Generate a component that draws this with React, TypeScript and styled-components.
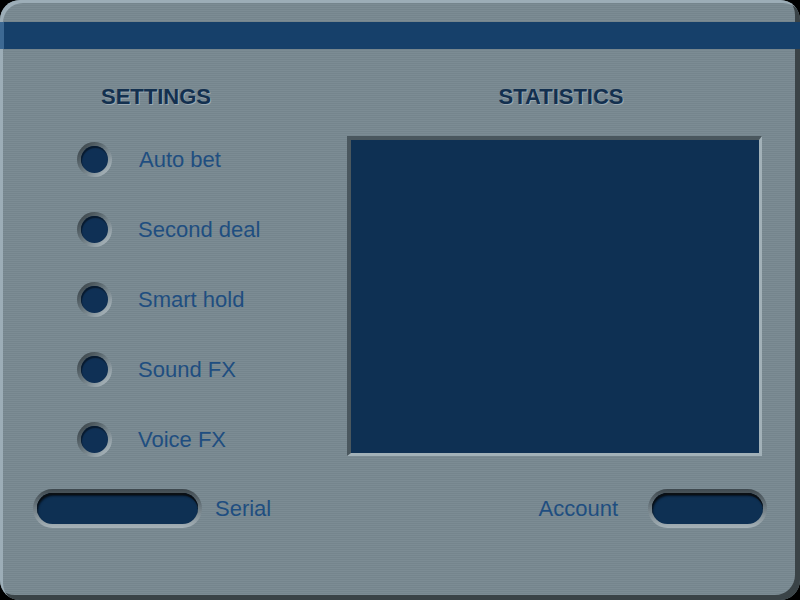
import styled, { createGlobalStyle } from 'styled-components'

const settings = ['Auto bet', 'Second deal', 'Smart hold', 'Sound FX', 'Voice FX']

const App = () => {
	return (
		<>
			<GlobalStyle />
			<Frame>
				<TitleBar />
				<Main>
					<Column>
						<Heading>SETTINGS</Heading>
						<OptionList>
							{settings.map(name => (
								<Option key={name}>
									<Knob>
										<KnobFace />
									</Knob>
									<Label $shift={name === 'Auto bet' ? 1 : 0}>{name}</Label>
								</Option>
							))}
						</OptionList>
					</Column>
					<Column>
						<Heading $offset={13}>STATISTICS</Heading>
						<StatsBox />
					</Column>
				</Main>
				<Footer>
					<FieldGroup $gap={13}>
						<Field $width={169}>
							<FieldFace />
						</Field>
						<Label>Serial</Label>
					</FieldGroup>
					<FieldGroup $gap={30}>
						<Label>Account</Label>
						<Field $width={119}>
							<FieldFace />
						</Field>
					</FieldGroup>
				</Footer>
			</Frame>
		</>
	)
}

export default App

const GlobalStyle = createGlobalStyle`
	html, body {
		margin: 0;
		padding: 0;
		background: #000;
	}
	body {
		width: 800px;
		height: 600px;
		overflow: hidden;
		font-family: 'Liberation Sans', Arial, sans-serif;
	}
`

const Frame = styled.div`
	width: 800px;
	height: 600px;
	box-sizing: border-box;
	border-radius: 20px;
	overflow: hidden;
	display: flex;
	flex-direction: column;
	background: repeating-linear-gradient(
		to bottom,
		#7c8c94 0px,
		#7c8c94 1px,
		#75858d 1px,
		#75858d 2px
	);
	box-shadow:
		inset 3px 3px 0 #9cadb7,
		inset -5px -5px 0 #3a4347;
`

const TitleBar = styled.div`
	margin-top: 22px;
	height: 27px;
	background: #16406a;
	box-shadow: inset 4px 0 0 #3d6993;
`

const Main = styled.div`
	display: grid;
	grid-template-columns: 312px 415px;
	column-gap: 35px;
	margin-top: 37px;
`

const Column = styled.div`
	display: flex;
	flex-direction: column;
	align-items: center;
`

const Heading = styled.h2<{ $offset?: number }>`
	margin: 0;
	padding-left: ${p => p.$offset ?? 0}px;
	font-size: 22px;
	line-height: 22px;
	font-weight: bold;
	color: #13304f;
	text-shadow: 1px 1px 0 rgba(170, 185, 195, 0.7);
`

const OptionList = styled.div`
	align-self: stretch;
	display: flex;
	flex-direction: column;
	gap: 35px;
	margin-top: 34px;
	padding-left: 77px;
`

const Option = styled.div`
	display: flex;
	align-items: center;
	gap: 26px;
	height: 35px;
`

const Knob = styled.div`
	width: 35px;
	height: 35px;
	box-sizing: border-box;
	padding: 4px;
	border-radius: 50%;
	background: linear-gradient(135deg, #2f383d 0%, #66747b 45%, #bac6cc 100%);
	flex-shrink: 0;
`

const KnobFace = styled.div`
	width: 100%;
	height: 100%;
	border-radius: 50%;
	background: #0f3055;
	box-shadow: inset 1px 2px 1px #081a2e;
`

const Label = styled.span<{ $shift?: number }>`
	font-size: 22px;
	line-height: 24px;
	color: #1f4e80;
	margin-left: ${p => p.$shift ?? 0}px;
	white-space: nowrap;
`

const StatsBox = styled.div`
	align-self: stretch;
	margin-top: 28px;
	height: 320px;
	box-sizing: border-box;
	background: #0e3053;
	border-style: solid;
	border-width: 4px 3px 3px 4px;
	border-color: #4a575e #a2b1b8 #a2b1b8 #4a575e;
`

const Footer = styled.div`
	display: flex;
	justify-content: space-between;
	align-items: center;
	margin-top: 32px;
	padding: 0 33px;
`

const FieldGroup = styled.div<{ $gap: number }>`
	display: flex;
	align-items: center;
	gap: ${p => p.$gap}px;
`

const Field = styled.div<{ $width: number }>`
	width: ${p => p.$width}px;
	height: 39px;
	box-sizing: border-box;
	padding: 4px;
	border-radius: 20px;
	background: linear-gradient(to bottom, #3e484e 0%, #66737a 40%, #a6b2b8 100%);
`

const FieldFace = styled.div`
	width: 100%;
	height: 100%;
	border-radius: 16px;
	background: #0e3053;
	box-shadow: inset 0 2px 0 #0a0f14, inset 1px 3px 2px #06121f;
`
